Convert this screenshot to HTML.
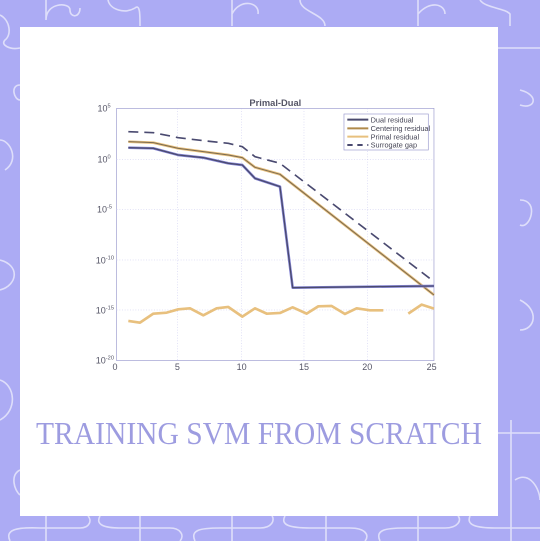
<!DOCTYPE html>
<html><head><meta charset="utf-8"><style>
html,body{margin:0;padding:0;width:540px;height:541px;overflow:hidden;background:#acabf4;}
svg{display:block}
</style></head><body>
<svg width="540" height="541" viewBox="0 0 540 541" xmlns="http://www.w3.org/2000/svg">
<rect width="540" height="541" fill="#acabf4"/>
<g fill="none" stroke="#e4e4fb" stroke-width="1.6" opacity="0.9">
<path d="M46 0 V20 C46 2 70 2 70 10 C70 18 80 18 80 8"/>
<path d="M108 0 C110 10 125 14 135 8 C140 4 140 14 140 26"/>
<path d="M232 0 V26 M232 14 C240 -2 260 2 258 14"/>
<path d="M300 0 C300 12 325 14 325 26"/>
<path d="M418 0 V26 M418 14 C430 0 445 4 445 14"/>
<path d="M480 0 C485 8 505 8 510 14 V26"/>
<path d="M0 15 C10 20 12 35 5 40 C0 45 10 50 20 48"/>
<path d="M498 48 H540"/>
<path d="M20 85 C10 85 14 100 20 100"/>
<path d="M520 90 C540 95 535 110 520 105"/>
<path d="M0 140 C10 140 20 160 5 170"/>
<path d="M520 200 C540 200 530 230 520 225"/>
<path d="M0 260 C20 265 18 285 0 290"/>
<path d="M520 300 C540 310 535 330 520 330"/>
<path d="M0 380 C15 385 18 410 0 420"/>
<path d="M498 433 H540 M511 420 V516"/>
<path d="M20 470 C10 475 14 490 20 495"/>
<path d="M515 480 C530 470 540 490 540 500"/>
<path d="M46 516 V541 M140 516 V541 M232 516 V541 M326 516 V541 M418 516 V541 M511 516 V541"/>
<path d="M10 541 C5 530 15 527 40 528 H80 C90 528 92 520 88 516"/>
<path d="M100 516 C95 525 105 528 120 528 H170 C180 528 185 535 180 541"/>
<path d="M195 541 C190 530 200 528 220 528 H260 C272 528 275 520 272 516"/>
<path d="M285 516 C280 525 290 528 310 528 H350 C365 528 370 535 365 541"/>
<path d="M380 541 C375 530 385 528 405 528 H445 C458 528 462 520 458 516"/>
<path d="M470 516 C466 525 476 528 495 528 H540"/>
</g>
<rect x="20" y="27" width="478" height="489" fill="#ffffff"/>
<g transform="translate(80,95) scale(0.3333)">
<rect x="110" y="40" width="952" height="757" fill="#fff" stroke="#9b9bcf" stroke-width="2"/>
<g stroke="#c6c6ee" stroke-width="1.5" stroke-dasharray="3 5">
<path d="M292 40V797 M485 40V797 M672 40V797 M862 40V797"/>
<path d="M110 193H1062 M110 343H1062 M110 495H1062 M110 645H1062"/>
</g>
<g font-family="Liberation Sans, sans-serif" font-size="27" fill="#555566">
<text x="586" y="33" text-anchor="middle" font-weight="bold" font-size="28">Primal-Dual</text>
<g text-anchor="middle">
<text x="105" y="825">0</text><text x="292" y="825">5</text><text x="485" y="825">10</text><text x="672" y="825">15</text><text x="862" y="825">20</text><text x="1055" y="825">25</text>
</g>
<g text-anchor="end">
<text x="92" y="50">10<tspan font-size="17" dy="-12">5</tspan></text>
<text x="92" y="203">10<tspan font-size="17" dy="-12">0</tspan></text>
<text x="96" y="353">10<tspan font-size="17" dy="-12">-5</tspan></text>
<text x="102" y="505">10<tspan font-size="17" dy="-12">-10</tspan></text>
<text x="102" y="655">10<tspan font-size="17" dy="-12">-15</tspan></text>
<text x="102" y="805">10<tspan font-size="17" dy="-12">-20</tspan></text>
</g>
</g>
<g fill="none" stroke-linejoin="round">
<path d="M145 678 L180 683 L220 656 L260 653 L295 643 L330 640 L370 661 L410 640 L445 636 L487 665 L525 640 L560 656 L600 654 L638 637 L680 656 L715 634 L755 633 L795 657 L830 640 L870 646 L910 646" stroke="#e8c07e" stroke-width="8"/>
<path d="M985 656 L1025 629 L1062 641" stroke="#e8c07e" stroke-width="8"/>
<path d="M145 140 L220 143 L295 160 L370 170 L445 180 L487 188 L525 217 L600 238 L1062 600" stroke="#e8c07e" stroke-width="8"/>
<path d="M145 140 L220 143 L295 160 L370 170 L445 180 L487 188 L525 217 L600 238 L1062 600" stroke="#7a6a50" stroke-width="3"/>
<path d="M145 158 L220 160 L295 180 L370 188 L445 205 L487 210 L525 250 L600 275 L638 578 L1062 573" stroke="#8888d8" stroke-width="8"/>
<path d="M145 158 L220 160 L295 180 L370 188 L445 205 L487 210 L525 250 L600 275 L638 578 L1062 573" stroke="#4a4a6e" stroke-width="4"/>
<path d="M145 110 L220 113 L295 128 L370 137 L445 145 L487 155 L525 185 L600 205 L1062 560" stroke="#4a4a70" stroke-width="5" stroke-dasharray="30 18"/>
</g>
<rect x="792" y="57" width="253" height="108" fill="#fff" stroke="#9b9bcf" stroke-width="2"/>
<g stroke-width="6">
<line x1="802" y1="74" x2="865" y2="74" stroke="#4a4a6e"/>
<line x1="802" y1="100" x2="865" y2="100" stroke="#b08a4a"/>
<line x1="802" y1="125" x2="865" y2="125" stroke="#e8c07e"/>
<line x1="802" y1="150" x2="865" y2="150" stroke="#4a4a70" stroke-dasharray="16 14"/>
</g>
<g font-family="Liberation Sans, sans-serif" font-size="22" fill="#444455">
<text x="872" y="82">Dual residual</text>
<text x="872" y="108">Centering residual</text>
<text x="872" y="133">Primal residual</text>
<text x="872" y="158">Surrogate gap</text>
</g>
</g>
<text x="36" y="444" textLength="446" lengthAdjust="spacingAndGlyphs" font-family="Liberation Serif, serif" font-size="32" fill="#9d9ce0">TRAINING SVM FROM SCRATCH</text>
</svg>
</body></html>
